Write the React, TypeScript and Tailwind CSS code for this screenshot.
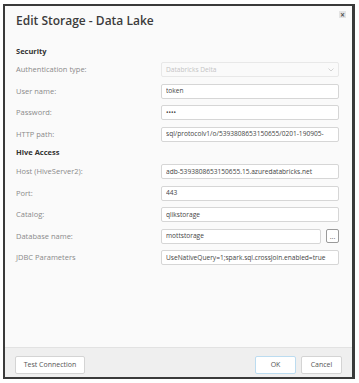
const font = { fontFamily: '"Open Sans", "Noto Sans", sans-serif' };

type Row = { label: string; value: string; disabled?: boolean; select?: boolean; browse?: boolean };

const security: Row[] = [
  { label: 'Authentication type:', value: 'Databricks Delta', disabled: true, select: true },
  { label: 'User name:', value: 'token' },
  { label: 'Password:', value: '••••' },
  { label: 'HTTP path:', value: 'sql/protocolv1/o/5393808653150655/0201-190905-' },
];

const hive: Row[] = [
  { label: 'Host (HiveServer2):', value: 'adb-5393808653150655.15.azuredatabricks.net' },
  { label: 'Port:', value: '443' },
  { label: 'Catalog:', value: 'qlikstorage' },
  { label: 'Database name:', value: 'mottstorage', browse: true },
  { label: 'JDBC Parameters', value: 'UseNativeQuery=1;spark.sql.crossJoin.enabled=true' },
];

function Field({ row }: { row: Row }) {
  return (
    <div className="flex h-[21.5px] items-center">
      <div className="w-[145px] shrink-0 text-[7.5px] text-[#8a8a8a]">{row.label}</div>
      <div className="flex w-[178px] items-center gap-[5px]">
        <div
          className={
            'flex h-[15px] flex-1 items-center overflow-hidden whitespace-nowrap rounded-[2px] border px-[4px] text-[6.6px] ' +
            (row.disabled ? 'border-[#e8e8e8] bg-[#fafafa] text-[#c4c4c4]' : 'border-[#d6d6d6] bg-white text-[#444]')
          }
        >
          <span className="flex-1 overflow-hidden">{row.value}</span>
          {row.select && (
            <svg width="6" height="4" viewBox="0 0 6 4" className="shrink-0">
              <path d="M0.5 0.5 L3 3 L5.5 0.5" fill="none" stroke="#c8c8c8" strokeWidth="0.8" />
            </svg>
          )}
        </div>
        {row.browse && (
          <div className="flex h-[14px] w-[13px] items-center justify-center rounded-[2px] border border-[#9a9a9a] bg-white text-[7px] leading-none text-[#555]">
            ...
          </div>
        )}
      </div>
    </div>
  );
}

export default function App() {
  return (
    <div className="h-[383px] w-[359px] bg-white pl-[3px] pt-[4px]" style={font}>
      <div className="flex h-[375px] w-[352px] flex-col border-2 border-r-[3px] border-[#3a3a3a] bg-[#fafafa]">
        <div className="relative flex h-[30px] shrink-0 items-center px-[11px]">
          <span className="text-[12px] font-semibold text-[#3c3c3c]">Edit Storage - Data Lake</span>
          <span className="absolute right-[6px] top-[5px] flex h-[7px] w-[7px] items-center justify-center bg-[#e4e4e4] text-[8px] font-bold leading-none text-[#555]">×</span>
        </div>
        <div className="flex-1 px-[11px]">
          <div className="mt-[9px] flex h-[14px] items-center text-[7.5px] font-bold text-[#333]">Security</div>
          {security.map((r) => (
            <Field key={r.label} row={r} />
          ))}
          <div className="flex h-[16px] items-center text-[7.5px] font-bold text-[#333]">Hive Access</div>
          {hive.map((r) => (
            <Field key={r.label} row={r} />
          ))}
        </div>
        <div className="flex h-[30px] shrink-0 items-start justify-between border-t border-[#e2e2e2] bg-[#efefef] px-[10px] pt-[8px]">
          <button className="h-[18px] w-[70px] rounded-[2px] border border-[#d4d4d4] bg-white text-[7px] text-[#555]">
            Test Connection
          </button>
          <div className="flex gap-[5px]">
            <button className="h-[18px] w-[41px] rounded-[2px] border border-[#bcdcf0] bg-white text-[7px] text-[#555]">
              OK
            </button>
            <button className="h-[18px] w-[41px] rounded-[2px] border border-[#d4d4d4] bg-white text-[7px] text-[#555]">
              Cancel
            </button>
          </div>
        </div>
      </div>
    </div>
  );
}
